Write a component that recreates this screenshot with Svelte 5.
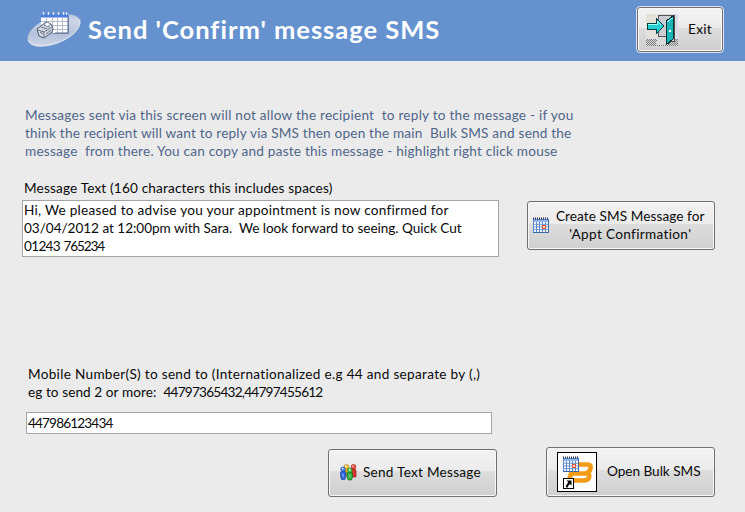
<script>
  const intro = [
    ['Messages sent via this screen will not allow the recipient  to reply to the message - if you', 548.5],
    ['think the recipient will want to reply via SMS then open the main  Bulk SMS and send the', 546.5],
    ['message  from there. You can copy and paste this message - highlight right click mouse', 532.5]
  ];
  const message = [
    ['Hi, We pleased to advise you your appointment is now confirmed for', 424.5],
    ['03/04/2012 at 12:00pm with Sara.  We look forward to seeing. Quick Cut', 437.5]
  ];

  // Tracks a run of text so that it spans the given width.
  function fit(node, width) {
    const natural = node.getBoundingClientRect().width;
    node.style.letterSpacing = `${(width - natural) / node.textContent.length}px`;
  }
</script>

{#snippet run(text, width)}<span use:fit={width}>{text}</span>{/snippet}

{#snippet line(text, width)}
  <div class="line">{@render run(text, width)}</div>
{/snippet}

{#snippet calendar()}
  <rect x="0" y="2" width="16" height="14" fill="#5d8acb" />
  <rect x="1" y="3" width="14" height="2" fill="#8fb4ee" />
  {#each [0, 1, 2, 3] as r}
    {#each [0, 1, 2, 3, 4] as c}
      <rect x={1 + c * 3} y={5 + r * 2.7} width="2" height="1.8" fill="#fff" />
    {/each}
  {/each}
  <rect x="9.5" y="8.5" width="3" height="3" fill="#fbd9cc" stroke="#dc5434" />
  <path d="M0 1.5H16" stroke="#26344f" stroke-width="2" stroke-dasharray="1 1" />
  <path d="M15.500 3V15.500H0" fill="none" stroke="#3e68a8" />
{/snippet}

<div class="screen">
  <header>
    <svg class="logo" width="56" height="38" viewBox="0 0 56 38">
      <defs>
        <linearGradient id="disc" x1="0" y1="1" x2="1" y2="0">
          <stop offset="0" stop-color="#e0e6f0" />
          <stop offset=".4" stop-color="#b4c2db" />
          <stop offset=".75" stop-color="#cdd6e7" />
          <stop offset="1" stop-color="#86a5d5" />
        </linearGradient>
      </defs>
      <ellipse cx="27" cy="19.5" rx="28" ry="13.5" transform="rotate(-22 27 19.5)" fill="url(#disc)" />
      <path d="M1 29Q3 35 16 34.500Q34 33 46 23Q54 15 53 8" fill="none" stroke="#eef2f8" stroke-width="1" opacity=".6" />
      <rect x="15" y="4" width="27" height="19" fill="#8293b7" />
      <rect x="14" y="3" width="27" height="19" fill="#fff" />
      <rect x="14" y="3" width="27" height="3.500" fill="#4c7ddd" />
      <path d="M14 10.500H41M14 14.500H41M14 18.500H41M19.500 6V22M25.500 6V22M30.500 6V22M35.500 6V22" stroke="#b6bbc9" />
      <path d="M41 6V22H28" fill="none" stroke="#59688c" />
      <path d="M16.500 1V4M21.500 1V4M26.500 1V4M31.500 1V4M36.500 1V4M39.500 1V4" stroke="#d9e6fb" stroke-width="1.500" />
      <path d="M10 18L19 11L24 13L26 17L25 21L17 27L12 25Z" fill="#d7dae2" stroke="#505a70" />
      <path d="M11 19L17 21L25 16M17 21V26M14 16L20 18M17 14L22 16M13 21L16 23M19 23L24 19" fill="none" stroke="#68728a" />
      <path d="M17 13L20 11L24 13L20 16Z" fill="#f8f9fb" stroke="#606a80" stroke-width=".7" />
    </svg>
    <h1>{@render run("Send 'Confirm' message SMS", 352)}</h1>
    <button class="exit">
      <svg width="32" height="32" viewBox="0 0 32 32" shape-rendering="crispEdges">
        <defs>
          <pattern id="floor" width="2" height="2" patternUnits="userSpaceOnUse">
            <rect width="2" height="2" fill="#ddd" />
            <rect width="1" height="1" fill="#777" />
            <rect x="1" y="1" width="1" height="1" fill="#777" />
          </pattern>
        </defs>
        <rect width="32" height="27" fill="#dcdce8" />
        <rect width="12" height="24" fill="#e4e2d8" />
        <path d="M0 25H32V32H0Z" fill="url(#floor)" />
        <path d="M12 1H28V27H12Z" fill="#ccccd2" stroke="#555" />
        <path d="M13 22H20V31H9Z" fill="#d9d9d9" />
        <path d="M12.500 22.500H20" stroke="#555" />
        <path d="M20 7L27 2V25L20 31Z" fill="#1eb5b9" stroke="#082f32" />
        <path d="M21 8L26.500 4" stroke="#8ff4f4" />
        <rect x="23" y="16" width="2" height="2" fill="#fff" />
        <path d="M1 9H10V4L18 12L10 20V15H1Z" fill="#25d0d5" stroke="#063e43" />
        <path d="M2 10H11V7L15 11" fill="none" stroke="#a1ffff" />
      </svg>
      <span class="label">{@render line('Exit', 24)}</span>
    </button>
  </header>

  <main>
    <section class="intro">
      {#each intro as [text, width]}{@render line(text, width)}{/each}
    </section>

    <section class="compose">
      <div class="field">
        <div class="caption">{@render line('Message Text (160 characters this includes spaces)', 308.5)}</div>
        <div class="box area">
          {#each message as [text, width]}{@render line(text, width)}{/each}
          <div class="line">{@render run('01243', 36)}{@render run(' ', 3.5)}{@render run('765234', 40.5)}</div>
        </div>
      </div>
      <button class="create">
        <svg width="16" height="16" viewBox="0 0 16 16">{@render calendar()}</svg>
        <span class="label">
          {@render line('Create SMS Message for', 148.5)}
          {@render line("'Appt Confirmation'", 122)}
        </span>
      </button>
    </section>

    <section class="mobile">
      <div class="caption">
        {@render line('Mobile Number(S) to send to (Internationalized e.g 44 and separate by (,)', 452.5)}
        <div class="line">{@render run('eg to send 2 or more:  ', 135.5)}{@render run('44797365432,44797455612', 159)}</div>
      </div>
      <div class="box single">{@render line('447986123434', 84.5)}</div>
    </section>

    <footer>
      <button class="send">
        <svg width="17" height="17" viewBox="0 0 17 17">
          <g stroke-width=".6">
            <path d="M4 5Q7 3 9 6V12H4Z" fill="#e7b420" stroke="#9b6e0b" />
            <circle cx="6.500" cy="2.800" r="2.300" fill="#f6cf42" stroke="#9b6e0b" />
            <path d="M10.500 5.500Q13.500 3 16 6V13H11Z" fill="#d8342b" stroke="#8e1812" />
            <circle cx="13.500" cy="2.800" r="2.400" fill="#ee5143" stroke="#8e1812" />
            <path d="M.5 8Q3 6 6 8V12L5 15.500H1.500L.5 12Z" fill="#2d64dc" stroke="#173c92" />
            <circle cx="3" cy="5.200" r="2.300" fill="#5590f5" stroke="#173c92" />
            <path d="M7 9Q9.500 7 12.500 9V13L11.500 16H8L7 13Z" fill="#2cae38" stroke="#146b1c" />
            <circle cx="9.800" cy="6.300" r="2.300" fill="#5bd45f" stroke="#146b1c" />
            <path d="M3 9.500V13M9.800 10.500V13.500" stroke="#b9dcff" stroke-width=".8" />
          </g>
          <circle cx="2.500" cy="4.500" r=".7" fill="#fff" />
          <circle cx="6" cy="2.200" r=".7" fill="#fff" />
          <circle cx="13" cy="2.200" r=".7" fill="#fff" />
          <circle cx="9.300" cy="5.600" r=".7" fill="#fff" />
        </svg>
        <span class="label">{@render line('Send Text Message', 118)}</span>
      </button>
      <button class="open">
        <svg width="40" height="40" viewBox="0 0 40 40">
          <rect x=".5" y=".5" width="39" height="39" fill="#fff" stroke="#000" />
          <path d="M16 12.500H30.500Q34.500 12.500 33.500 16.500Q33 19.500 30 20.800Q33 22.500 32 25.500Q31 28.500 27 28.500H12L14 21.500H30" fill="none" stroke="#f49b15" stroke-width="4.600" stroke-linejoin="round" />
          <g transform="translate(6 4)">{@render calendar()}</g>
          <rect x="6.500" y="26.500" width="10" height="10" fill="#fff" stroke="#000" />
          <path d="M9.500 28.500H14.500V33.500L12.900 31.900L10.800 34.500V35.500H9V33.500L11.300 30.300Z" fill="#000" />
        </svg>
        <span class="label">{@render line('Open Bulk SMS', 93.5)}</span>
      </button>
    </footer>
  </main>
</div>

<style>
  .screen {
    box-sizing: border-box;
    width: 745px;
    height: 512px;
    overflow: hidden;
    background: #ebebeb;
    color: #0a0a0a;
    font: 13.6px/18px Lato, "Open Sans", sans-serif;
    font-kerning: normal;
  }
  header {
    display: flex;
    align-items: flex-start;
    box-sizing: border-box;
    height: 61px;
    padding: 7px 22px 0 27px;
    background: #6592cf;
  }
  .logo {
    margin-top: 4px;
    overflow: visible;
    flex: none;
  }
  h1 {
    flex: 1;
    margin: 6px 0 0 5px;
    color: #fff;
    font-size: 25.5px;
    line-height: 32px;
    font-weight: 700;
    white-space: pre;
  }
  .line {
    height: 18px;
    white-space: pre;
  }
  .intro {
    padding: 45px 0 0 25px;
    color: #4f6689;
  }
  .compose {
    display: flex;
    align-items: flex-start;
    gap: 28px;
    padding: 19px 0 0 22px;
  }
  .field .caption {
    padding: 0 0 3px 2px;
  }
  .box {
    box-sizing: border-box;
    border: 1px solid #a3a5a7;
    background: #fff;
  }
  .area {
    width: 477px;
    height: 57px;
    padding: 0 0 0 1px;
  }
  .mobile {
    padding: 108px 0 0 26px;
  }
  .mobile .caption {
    padding: 0 0 11px 2px;
  }
  .single {
    width: 466px;
    height: 22px;
    padding: 1px 0 0 1px;
  }
  footer {
    display: flex;
    align-items: flex-start;
    gap: 49px;
    padding: 13px 0 0 328px;
  }
  button {
    display: flex;
    align-items: center;
    box-sizing: border-box;
    flex: none;
    margin: 0;
    border: 1px solid #707070;
    border-radius: 3px;
    background: linear-gradient(#f2f2f2, #ebebeb 46%, #dddddd 47%, #cfcfcf);
    box-shadow: inset 0 0 0 1px #f7f7f7;
    color: inherit;
    font: inherit;
    text-align: center;
  }
  .label {
    padding-bottom: 2px;
  }
  .exit {
    width: 86px;
    height: 45px;
    padding: 0 0 0 8px;
    gap: 10px;
    outline: 1px solid #dbe5f3;
  }
  .create {
    width: 188px;
    height: 49px;
    margin-top: 22px;
    padding: 0 0 0 5px;
    gap: 7px;
  }
  .create svg {
    margin-top: -2px;
  }
  .send {
    width: 169px;
    height: 48px;
    margin-top: 2px;
    padding: 0 0 0 11px;
    gap: 6px;
  }
  .send svg {
    margin-top: -2px;
  }
  .open {
    width: 169px;
    height: 50px;
    padding: 0 0 0 10px;
    gap: 10px;
  }
</style>
